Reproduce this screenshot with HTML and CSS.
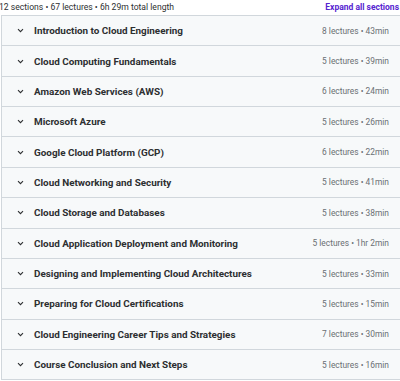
FILE: index.html
```html
<!DOCTYPE html>
<html>
<head>
<meta charset="utf-8">
<link rel="stylesheet" href="styles.css">
</head>
<body>
<div class="page">
  <div class="summary">
    <span class="meta">12 sections • 67 lectures • 6h 29m total length</span>
    <a class="expand">Expand all sections</a>
  </div>
  <div class="sections">
    <div class="row"><span class="chev"><svg width="7" height="5" viewBox="0 0 7 5"><path d="M1 1.2 L3.5 3.7 L6 1.2" fill="none" stroke="#2d2f31" stroke-width="1.1"/></svg></span><span class="title">Introduction to Cloud Engineering</span><span class="info">8 lectures • 43min</span></div>
    <div class="row"><span class="chev"><svg width="7" height="5" viewBox="0 0 7 5"><path d="M1 1.2 L3.5 3.7 L6 1.2" fill="none" stroke="#2d2f31" stroke-width="1.1"/></svg></span><span class="title">Cloud Computing Fundamentals</span><span class="info">5 lectures • 39min</span></div>
    <div class="row"><span class="chev"><svg width="7" height="5" viewBox="0 0 7 5"><path d="M1 1.2 L3.5 3.7 L6 1.2" fill="none" stroke="#2d2f31" stroke-width="1.1"/></svg></span><span class="title">Amazon Web Services (AWS)</span><span class="info">6 lectures • 24min</span></div>
    <div class="row"><span class="chev"><svg width="7" height="5" viewBox="0 0 7 5"><path d="M1 1.2 L3.5 3.7 L6 1.2" fill="none" stroke="#2d2f31" stroke-width="1.1"/></svg></span><span class="title">Microsoft Azure</span><span class="info">5 lectures • 26min</span></div>
    <div class="row"><span class="chev"><svg width="7" height="5" viewBox="0 0 7 5"><path d="M1 1.2 L3.5 3.7 L6 1.2" fill="none" stroke="#2d2f31" stroke-width="1.1"/></svg></span><span class="title">Google Cloud Platform (GCP)</span><span class="info">6 lectures • 22min</span></div>
    <div class="row"><span class="chev"><svg width="7" height="5" viewBox="0 0 7 5"><path d="M1 1.2 L3.5 3.7 L6 1.2" fill="none" stroke="#2d2f31" stroke-width="1.1"/></svg></span><span class="title">Cloud Networking and Security</span><span class="info">5 lectures • 41min</span></div>
    <div class="row"><span class="chev"><svg width="7" height="5" viewBox="0 0 7 5"><path d="M1 1.2 L3.5 3.7 L6 1.2" fill="none" stroke="#2d2f31" stroke-width="1.1"/></svg></span><span class="title">Cloud Storage and Databases</span><span class="info">5 lectures • 38min</span></div>
    <div class="row"><span class="chev"><svg width="7" height="5" viewBox="0 0 7 5"><path d="M1 1.2 L3.5 3.7 L6 1.2" fill="none" stroke="#2d2f31" stroke-width="1.1"/></svg></span><span class="title">Cloud Application Deployment and Monitoring</span><span class="info">5 lectures • 1hr 2min</span></div>
    <div class="row"><span class="chev"><svg width="7" height="5" viewBox="0 0 7 5"><path d="M1 1.2 L3.5 3.7 L6 1.2" fill="none" stroke="#2d2f31" stroke-width="1.1"/></svg></span><span class="title">Designing and Implementing Cloud Architectures</span><span class="info">5 lectures • 33min</span></div>
    <div class="row"><span class="chev"><svg width="7" height="5" viewBox="0 0 7 5"><path d="M1 1.2 L3.5 3.7 L6 1.2" fill="none" stroke="#2d2f31" stroke-width="1.1"/></svg></span><span class="title">Preparing for Cloud Certifications</span><span class="info">5 lectures • 15min</span></div>
    <div class="row"><span class="chev"><svg width="7" height="5" viewBox="0 0 7 5"><path d="M1 1.2 L3.5 3.7 L6 1.2" fill="none" stroke="#2d2f31" stroke-width="1.1"/></svg></span><span class="title">Cloud Engineering Career Tips and Strategies</span><span class="info">7 lectures • 30min</span></div>
    <div class="row"><span class="chev"><svg width="7" height="5" viewBox="0 0 7 5"><path d="M1 1.2 L3.5 3.7 L6 1.2" fill="none" stroke="#2d2f31" stroke-width="1.1"/></svg></span><span class="title">Course Conclusion and Next Steps</span><span class="info">5 lectures • 16min</span></div>
  </div>
</div>
</body>
</html>
```
FILE: styles.css
```css
html, body { margin: 0; padding: 0; background: #fff; }
body { font-family: Roboto, "Noto Sans", sans-serif; color: #2d2f31; }
.page { width: 402px; }
.summary {
  display: flex; justify-content: space-between; align-items: center;
  height: 14px; padding: 0 3px 0 0; margin-left: -1px;
  font-size: 8.6px;
}
.meta { color: #2d2f31; }
.expand { color: #5624d0; font-weight: 700; font-size: 8.5px; }
.sections {
  margin-left: 1px; margin-top: 1px;
  border: 1px solid #d1d7dc; border-right: none;
}
.row {
  display: flex; align-items: center;
  height: 29.36px; background: #f7f9fa;
  border-bottom: 1px solid #d1d7dc;
  padding: 0 13px 0 15px;
}
.row:last-child { border-bottom: none; }
.chev { width: 17px; display: flex; align-items: center; }
.title { flex: 1; font-weight: 700; font-size: 9.9px; color: #2d2f31; }
.info { font-size: 8.4px; color: #6a6f73; }
```
